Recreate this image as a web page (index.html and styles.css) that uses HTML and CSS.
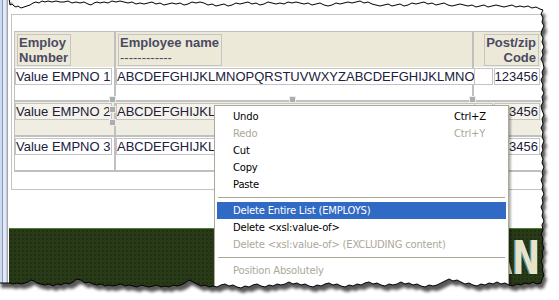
FILE: index.html
```html
<!DOCTYPE html>
<html lang="en">
<head>
    <meta charset="UTF-8">
    <title>Report designer - context menu</title>
    <link rel="stylesheet" href="styles.css">
</head>
<body>
    <div class="screen">
        <div class="sidebar"></div>
        <div class="canvas">
            <div class="outer">
                <div class="grid">
                    <div class="row head">
                        <div class="cell c1"><div class="box hbox">Employ<br>Number</div></div>
                        <div class="cell c2"><div class="box hbox">Employee name<br><span class="dash">------------</span></div></div>
                        <div class="cell c3"><div class="box hbox right">Post/zip<br>Code</div></div>
                    </div>
                    <div class="row">
                        <div class="cell c1"><div class="box">Value EMPNO 1</div></div>
                        <div class="cell c2"><div class="box">ABCDEFGHIJKLMNOPQRSTUVWXYZABCDEFGHIJKLMNO</div></div>
                        <div class="cell c3"><div class="box empty"></div><div class="box">123456</div></div>
                    </div>
                    <div class="row alt">
                        <div class="cell c1"><div class="box">Value EMPNO 2</div></div>
                        <div class="cell c2"><div class="box">ABCDEFGHIJKLMNOPQRSTUVWXYZABCDEFGHIJKLMNO</div></div>
                        <div class="cell c3"><div class="box empty"></div><div class="box">123456</div></div>
                    </div>
                    <div class="row">
                        <div class="cell c1"><div class="box">Value EMPNO 3</div></div>
                        <div class="cell c2"><div class="box">ABCDEFGHIJKLMNOPQRSTUVWXYZABCDEFGHIJKLMNO</div></div>
                        <div class="cell c3"><div class="box empty"></div><div class="box">123456</div></div>
                    </div>
                </div>
            </div>
            <div class="banner"><span class="logo">AN</span></div>
        </div>
    </div>

    <!-- selection handles -->
    <div class="handle h1"></div>
    <div class="handle h2"></div>
    <div class="handle h3"></div>
    <div class="handle h4"></div>
    <div class="handle h5"></div>

    <div class="menu">
        <div class="item"><span>Undo</span><span class="key">Ctrl+Z</span></div>
        <div class="item off"><span>Redo</span><span class="key">Ctrl+Y</span></div>
        <div class="item"><span>Cut</span></div>
        <div class="item"><span>Copy</span></div>
        <div class="item"><span>Paste</span></div>
        <div class="sep"></div>
        <div class="item active"><span>Delete Entire List (EMPLOYS)</span></div>
        <div class="item"><span>Delete &lt;xsl:value-of&gt;</span></div>
        <div class="item off"><span>Delete &lt;xsl:value-of&gt; (EXCLUDING content)</span></div>
        <div class="sep"></div>
        <div class="item off"><span>Position Absolutely</span></div>
        <div class="item"><span>&nbsp;</span></div>
    </div>

    <!-- torn paper edge -->
    <svg class="torn" width="559" height="300" viewBox="0 0 559 300">
        <defs>
            <path id="paper" d="M-2,-2 L9,-2 L10,5 12,4 14,6 16,7 18,6 21,8 24,7 27,6 30,5 33,3 36,2 39,3 42,1 45,2 48,1 52,2 56,1 60,2 64,2 68,1 72,3 76,2 80,3 84,2 88,4 91,5 94,3 97,2 100,3 104,2 108,3 112,1 116,2 120,1 124,2 128,3 132,2 136,4 140,3 144,4 148,3 152,2 156,4 160,3 164,5 168,4 172,3 176,4 180,3 184,5 188,4 192,2 196,3 200,2 204,3 208,5 212,4 216,6 220,5 224,4 228,6 232,5 236,3 240,4 244,3 248,2 252,4 256,3 260,5 264,4 268,2 272,3 276,4 280,3 284,4 288,2 292,3 296,2 300,3 304,4 308,3 312,5 316,4 320,3 324,5 328,6 332,5 336,3 340,4 344,3 348,2 352,3 356,2 360,1 364,3 368,2 372,4 376,5 380,6 384,5 388,4 392,6 396,5 400,4 404,6 408,5 412,3 416,4 420,3 424,2 428,4 432,3 436,5 440,4 444,3 448,5 452,6 456,5 460,4 464,5 468,6 472,5 476,7 480,6 484,5 488,7 492,6 496,5 500,6 504,7 508,6 512,5 516,7 520,6 524,7 528,6 532,8 536,7 540,9 543,10 541,14 543,18 542,22 544,26 542,30 541,34 543,38 542,42 544,47 542,51 543,55 541,59 543,63 544,68 542,72 543,76 541,80 543,85 542,89 544,93 542,97 543,102 541,106 542,110 544,115 542,119 543,124 541,128 543,132 542,137 544,141 542,146 543,150 541,154 543,159 542,163 544,167 542,172 543,176 541,180 543,185 542,189 544,194 542,198 543,203 541,207 543,212 542,216 544,221 542,225 543,230 541,234 543,239 542,243 544,248 542,252 543,257 541,261 543,266 542,270 544,275 542,279 541,283 537,284 533,282 529,284 525,283 521,285 517,284 513,286 509,285 505,283 501,284 497,282 493,284 489,283 485,285 481,284 477,286 473,285 469,283 465,284 461,282 457,280 453,281 449,279 445,281 441,283 437,285 433,286 429,285 425,287 421,286 417,284 413,285 409,283 405,284 401,282 397,284 393,285 389,284 385,286 381,285 377,283 373,284 369,282 365,283 361,285 357,284 353,286 349,285 345,287 341,286 337,284 333,285 329,283 325,284 321,286 317,285 313,287 309,286 305,284 301,285 297,283 293,284 289,282 285,284 281,285 277,284 273,286 269,285 265,287 261,286 257,284 253,285 249,287 245,286 241,288 237,287 233,285 229,286 225,284 221,285 217,287 213,286 209,287 205,285 201,286 197,284 193,282 189,280 185,283 181,285 177,286 173,285 169,287 165,286 161,287 157,285 153,286 149,287 145,286 141,285 137,287 133,286 129,285 125,286 121,284 117,285 113,286 109,285 105,286 101,284 97,285 93,284 89,282 85,283 81,280 77,279 73,282 69,284 65,283 61,285 57,284 53,286 49,284 45,285 41,284 37,283 34,281 31,280 28,282 25,283 21,284 17,283 13,284 10,283 0,283 -2,283 Z"/>
            <mask id="outside" maskUnits="userSpaceOnUse" x="-10" y="-10" width="580" height="320">
                <rect x="-10" y="-10" width="580" height="320" fill="#fff"/>
                <use href="#paper" fill="#000"/>
            </mask>
            <filter id="blur" x="-5%" y="-5%" width="110%" height="110%">
                <feGaussianBlur stdDeviation="1.6"/>
            </filter>
        </defs>
        <g mask="url(#outside)">
            <rect x="-10" y="-10" width="580" height="320" fill="#fff"/>
            <use href="#paper" fill="#3a3a3a" opacity="0.85" transform="translate(3,5)" filter="url(#blur)"/>
        </g>
        <use href="#paper" fill="none" stroke="#000" stroke-width="1"/>
    </svg>
</body>
</html>
```

FILE: styles.css
```css
* {
    margin: 0;
    padding: 0;
    box-sizing: border-box;
}

body {
    width: 559px;
    height: 300px;
    overflow: hidden;
    position: relative;
    background: #fff;
    font-family: 'Liberation Sans', Arial, sans-serif;
}

.screen {
    display: flex;
    height: 300px;
}

.sidebar {
    width: 9px;
    flex: none;
    background: linear-gradient(90deg,
        #d2d9e7 0, #d2d9e7 2px,
        #7b97cf 2px, #7b97cf 3px,
        #e4eaf5 3px, #e4eaf5 6px,
        #c3c7d1 6px, #c3c7d1 7px,
        #a3a7b0 7px, #a3a7b0 8px,
        #fff 8px);
}

.canvas {
    flex: 1;
    display: flex;
    flex-direction: column;
    padding-top: 14px;
    overflow: hidden;
    background: #fff;
}

.outer {
    margin-left: 2px;
    border: 1px solid #c4c4c4;
    border-right: 0;
    padding: 16px 0 17px 2px;
}

.grid {
    width: max-content;
    border-left: 1px solid #c0c0c0;
    border-top: 1px solid #c0c0c0;
}

.row {
    display: flex;
    height: 35px;
    border-bottom: 2px solid #c0c0c0;
    background: #fff;
    font-size: 13px;
    line-height: 15px;
    color: #20203c;
}

.row.head {
    border-bottom: 0;
    background: #ece9d8;
    color: #4a4a62;
    font-weight: bold;
}

.row.alt {
    background: #f0eee3;
}

.cell {
    display: flex;
    align-items: flex-start;
    padding-top: 1px;
    border-right: 2px solid #c0c0c0;
}

.head .cell {
    padding: 2px 0 0 2px;
}

.c1 { width: 101px; }
.c2 { width: 358px; }
.c3 {
    width: 67px;
    border-right: 0;
    justify-content: flex-end;
    gap: 1px;
    padding-right: 1px;
}
.head .c3 { padding-right: 2px; }

.box {
    border: 1px solid #c4c4c4;
    padding: 0 1px 0 0;
    white-space: nowrap;
    background: #fff;
}

.alt .box { background: #f4f2e9; }

.hbox {
    background: transparent;
    padding: 0 2px 0 1px;
}

.right { text-align: right; }

.dash { font-weight: normal; }

.empty {
    width: 24px;
    height: 17px;
    margin-right: auto;
}

.banner {
    flex: 1;
    margin-top: 38px;
    border-top: 1px solid #4f7f28;
    background-color: #283a17;
    background-image: radial-gradient(circle, rgba(15, 25, 8, 0.3) 0.9px, transparent 1.2px);
    background-size: 4px 4px;
    display: flex;
    justify-content: flex-end;
    align-items: flex-start;
    padding: 6px 19px 0 0;
}

.logo {
    font-family: 'DejaVu Sans', sans-serif;
    font-weight: bold;
    font-size: 46px;
    line-height: 46px;
    color: #e8e2c7;
    text-shadow: -2px 0 0 #4a97b2;
    transform: scaleX(0.72);
    transform-origin: right center;
}

.handle {
    position: absolute;
    width: 5px;
    height: 5px;
    background: #adadad;
    outline: 1px solid #ececec;
}
.h1 { left: 110px; top: 97px; }
.h2 { left: 110px; top: 107px; }
.h3 { left: 110px; top: 120px; }
.h4 { left: 290px; top: 97px; }
.h5 { left: 470px; top: 97px; }

.menu {
    position: absolute;
    left: 214px;
    top: 105px;
    width: 295px;
    padding: 2px;
    background: #fff;
    border: 1px solid #aca899;
    box-shadow: 2px 2px 2px rgba(0, 0, 0, 0.3);
    font-family: 'DejaVu Sans', Tahoma, sans-serif;
    font-size: 10px;
    letter-spacing: -0.2px;
    color: #000;
}

.item {
    display: flex;
    height: 17px;
    line-height: 17px;
    padding-left: 16px;
    white-space: nowrap;
}

.item .key {
    margin-left: auto;
    width: 52px;
}

.item.off { color: #aca899; }

.item.active {
    background: #316ac5;
    color: #fff;
}

.sep {
    height: 9px;
    margin: 0 1px;
    padding-top: 4px;
}
.sep::before {
    content: "";
    display: block;
    border-top: 1px solid #aca899;
}

.torn {
    position: absolute;
    left: 0;
    top: 0;
}
```
